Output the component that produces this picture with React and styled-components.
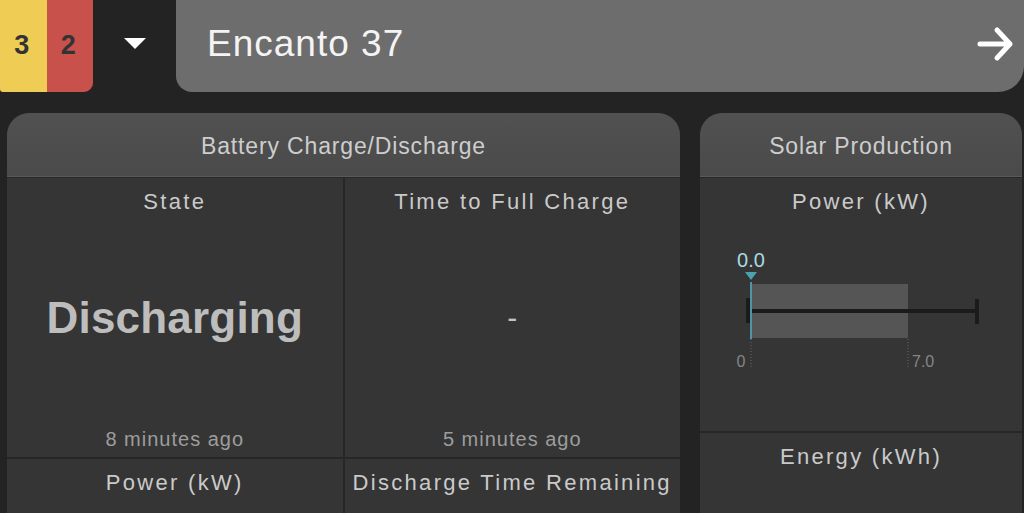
import React from 'react'
import styled, { createGlobalStyle } from 'styled-components'

const GlobalStyle = createGlobalStyle`
  html, body {
    margin: 0;
    padding: 0;
    background: #232323;
    font-family: "Liberation Sans", Arial, sans-serif;
    overflow: hidden;
  }
`;

function App() {
  return (
    <Page>
      <GlobalStyle />
      <TopBar>
        <Badges>
          <Badge color="#efcd55">3</Badge>
          <Badge color="#c9514b">2</Badge>
        </Badges>
        <Dropdown>
          <svg width="24" height="13" viewBox="0 0 24 13">
            <polygon points="1,1 23,1 12,12" fill="#fff" />
          </svg>
        </Dropdown>
        <SearchBar>
          <SiteName>Encanto 37</SiteName>
          <svg width="38" height="38" viewBox="0 0 38 38">
            <path d="M3 19 H33 M20 5 L33 19 L20 33" fill="none" stroke="#fff" strokeWidth="5" strokeLinecap="round" strokeLinejoin="round" />
          </svg>
        </SearchBar>
      </TopBar>

      <Panels>
        <Panel width="673px">
          <PanelHeader>Battery Charge/Discharge</PanelHeader>
          <CellGrid cols={2} rows="279px 1fr">
            <Cell>
              <CellTitle>State</CellTitle>
              <BigValue>Discharging</BigValue>
              <Updated>8 minutes ago</Updated>
            </Cell>
            <Cell>
              <CellTitle>Time to Full Charge</CellTitle>
              <DashValue>-</DashValue>
              <Updated>5 minutes ago</Updated>
            </Cell>
            <Cell>
              <CellTitle>Power (kW)</CellTitle>
            </Cell>
            <Cell>
              <CellTitle>Discharge Time Remaining</CellTitle>
            </Cell>
          </CellGrid>
        </Panel>

        <Panel grow>
          <PanelHeader>Solar Production</PanelHeader>
          <CellGrid cols={1} rows="253px 1fr">
            <Cell>
              <CellTitle>Power (kW)</CellTitle>
              <Gauge>
                <svg width="322" height="140" viewBox="700 237 322 140">
                  <text x="751" y="267" textAnchor="middle" fontSize="20" fill="#a9dbe3" fontFamily="Liberation Sans, Arial, sans-serif">0.0</text>
                  <polygon points="745,272 757,272 751,280" fill="#4aa2b3" />
                  <rect x="751" y="284" width="157" height="54" fill="#555555" />
                  <line x1="748" y1="311" x2="977" y2="311" stroke="#1b1b1b" strokeWidth="4" />
                  <rect x="746" y="298" width="4" height="25" fill="#1b1b1b" />
                  <rect x="975" y="299" width="4" height="25" fill="#1b1b1b" />
                  <rect x="750" y="282" width="2" height="57" fill="#4e96a6" />
                  <line x1="751" y1="339" x2="751" y2="368" stroke="#6a6a6a" strokeWidth="1" strokeDasharray="1 2" />
                  <line x1="908" y1="339" x2="908" y2="368" stroke="#6a6a6a" strokeWidth="1" strokeDasharray="1 2" />
                  <text x="741" y="367" textAnchor="middle" fontSize="16" fill="#858585" fontFamily="Liberation Sans, Arial, sans-serif">0</text>
                  <text x="912" y="367" fontSize="16" fill="#858585" fontFamily="Liberation Sans, Arial, sans-serif">7.0</text>
                </svg>
              </Gauge>
            </Cell>
            <Cell>
              <CellTitle>Energy (kWh)</CellTitle>
            </Cell>
          </CellGrid>
        </Panel>
      </Panels>
    </Page>
  )
}

export default App

const Page = styled.div`
  width: 1024px;
  height: 513px;
  display: flex;
  flex-direction: column;
  background: #232323;
  overflow: hidden;
`;

const TopBar = styled.div`
  display: flex;
  height: 92px;
  flex-shrink: 0;
`;

const Badges = styled.div`
  display: flex;
  width: 93px;
  border-bottom-right-radius: 9px;
  border-bottom-left-radius: 3px;
  overflow: hidden;
`;

const Badge = styled.div`
  flex: 1;
  display: flex;
  align-items: center;
  justify-content: center;
  background: ${p => p.color};
  color: #333;
  font-size: 27px;
  font-weight: bold;
  padding: 0 3px 2px 0;
`;

const Dropdown = styled.div`
  width: 83px;
  display: flex;
  align-items: center;
  justify-content: center;
  padding-bottom: 6px;
`;

const SearchBar = styled.div`
  flex: 1;
  display: flex;
  align-items: center;
  justify-content: space-between;
  background: #6d6d6d;
  border-bottom-left-radius: 16px;
  border-bottom-right-radius: 26px;
  padding: 0 9px 4px 31px;
`;

const SiteName = styled.div`
  color: #f4f4f4;
  font-size: 37px;
  letter-spacing: 1px;
`;

const Panels = styled.div`
  flex: 1;
  display: flex;
  gap: 20px;
  padding: 21px 2px 0 7px;
  min-height: 0;
`;

const Panel = styled.div`
  display: flex;
  flex-direction: column;
  width: ${p => p.width || 'auto'};
  flex: ${p => (p.grow ? 1 : 'none')};
  border-radius: 22px 22px 0 0;
  overflow: hidden;
  background: #272727;
`;

const PanelHeader = styled.div`
  height: 64px;
  flex-shrink: 0;
  display: flex;
  align-items: center;
  justify-content: center;
  background: linear-gradient(#515151, #4a4a4a);
  border-bottom: 1px solid #5a5a5a;
  color: #cdcdcd;
  font-size: 23px;
  letter-spacing: 0.85px;
  padding-top: 4px;
  box-sizing: border-box;
`;

const CellGrid = styled.div`
  flex: 1;
  display: grid;
  grid-template-columns: repeat(${p => p.cols}, 1fr);
  grid-template-rows: ${p => p.rows};
  gap: 2px;
  padding-top: 1px;
  background: #272727;
`;

const Cell = styled.div`
  display: flex;
  flex-direction: column;
  align-items: center;
  background: #353535;
  padding: 11px 0 6px;
  min-height: 0;
`;

const CellTitle = styled.div`
  color: #cacaca;
  font-size: 22px;
  letter-spacing: 2.3px;
  line-height: 26px;
`;

const BigValue = styled.div`
  flex: 1;
  display: flex;
  align-items: center;
  color: #bdbdbd;
  font-size: 44px;
  font-weight: bold;
  letter-spacing: 0.2px;
  padding-bottom: 6px;
`;

const DashValue = styled(BigValue)`
  font-weight: normal;
  font-size: 30px;
  color: #c4c4c4;
`;

const Updated = styled.div`
  color: #9d9d9d;
  font-size: 20px;
  letter-spacing: 1px;
  line-height: 24px;
`;

const Gauge = styled.div`
  align-self: stretch;
  margin-top: 22px;
  height: 140px;
  svg {
    display: block;
  }
`;
